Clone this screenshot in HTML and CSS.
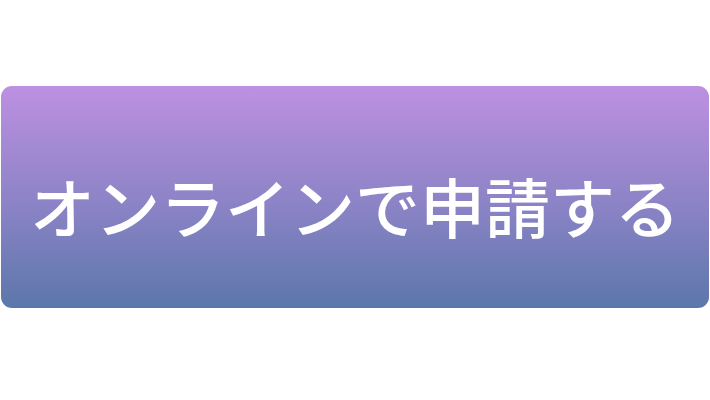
FILE: index.html
```html
<!DOCTYPE html>
<html lang="ja">
<head>
<meta charset="utf-8">
<link rel="stylesheet" href="styles.css">
</head>
<body>
<div class="page">
  <a class="apply-btn" href="#">オンラインで申請する</a>
</div>
</body>
</html>
```
FILE: styles.css
```css
html, body {
  margin: 0;
  padding: 0;
  background: #ffffff;
}
.page {
  width: 710px;
  height: 400px;
  box-sizing: border-box;
  padding: 86px 1px 0 1px;
}
.apply-btn {
  display: flex;
  align-items: center;
  justify-content: center;
  height: 222px;
  border-radius: 11px;
  background: linear-gradient(to bottom, #bd90e1 0%, #8f84c8 50%, #5b77aa 100%);
  color: #ffffff;
  text-decoration: none;
  font-family: "Noto Sans CJK JP", "Noto Sans", sans-serif;
  font-size: 65px;
  font-weight: 500;
  line-height: 1;
  white-space: nowrap;
  padding-top: 16px;
  box-sizing: border-box;
}
```
